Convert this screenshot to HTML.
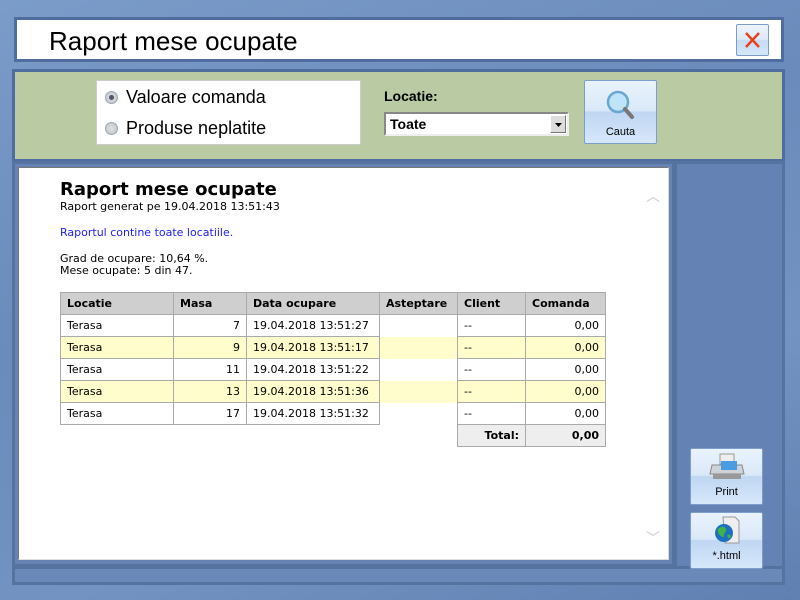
<!DOCTYPE html>
<html><head><meta charset="utf-8"><style>
*{margin:0;padding:0;box-sizing:border-box}
body{width:800px;height:600px;overflow:hidden;position:relative;background:linear-gradient(160deg,#7b9cc9 0%,#6a8bbb 40%,#7393c2 70%,#5f80b1 100%);font-family:"Liberation Sans",sans-serif}
.abs{position:absolute}
.title{left:14px;top:17px;width:770px;height:45px;background:#fff;border:3px solid #4f6d9f;}
.title span{position:absolute;left:32px;top:6px;font-size:26px;color:#000}
.close{left:736px;top:24px;width:33px;height:32px;border:1px solid #7a9ccc;background:linear-gradient(#eef5fd 0,#dbe9f9 48%,#c6dcf4 52%,#d4e6f9 100%);border-radius:2px}
.green{left:12px;top:69px;width:773px;height:93px;background:#bacba3;border:3px solid #4f6d9f}
.radio{left:96px;top:80px;width:265px;height:65px;background:#fff;border:1px solid #ccc}
.rb{position:absolute;left:8px;width:13px;height:13px;border-radius:50%;background:radial-gradient(#e0e0e0,#bcc3cc);border:1px solid #9aa}
.rl{position:absolute;left:29px;font-size:18px;color:#000}
.lbl{left:384px;top:88px;font-size:14px;font-weight:bold;color:#000}
.sel{left:384px;top:112px;width:185px;height:24px;background:#fff;border:2px solid;border-color:#888 #eee #eee #888}
.sel span{position:absolute;left:4px;top:2px;font-size:14px;font-weight:bold}
.sel i{position:absolute;right:1px;top:1px;width:16px;height:18px;background:#ddd;border:1px solid;border-color:#fff #777 #777 #fff}
.btn{border:1px solid #7c9ecf;background:linear-gradient(#eaf3fd 0,#d9e8f8 48%,#bfd6f2 50%,#d6e7fa 100%);border-radius:2px;font-size:11px;text-align:center;color:#000}
.frame{left:12px;top:161px;width:663px;height:406px;border:3px solid #56739f;background:#6683b3}
.right{left:674px;top:161px;width:111px;height:414px;border:3px solid #56739f;background:#6482b3}
.white{left:18px;top:167px;width:651px;height:393px;background:#fff;border:1px solid #777;border-right-color:#ddd;border-bottom-color:#ddd}
.rep{font-family:"DejaVu Sans",sans-serif;font-size:11px;color:#000;line-height:12px}
table{border-collapse:collapse;position:absolute;left:60px;top:292px;font-family:"DejaVu Sans",sans-serif;font-size:11px}
td{height:22px;padding:0 6px;border:1px solid #aaa;}
th{height:22px;padding:0 6px;background:#cfcfcf;border:1px solid #aaa;text-align:left;font-weight:bold}
.y td{background:#fffdcb}
.r{text-align:right}
.bottom{left:12px;top:566px;width:773px;height:19px;border:3px solid #56739f;background:#6b89b8}
</style></head><body>
<div class="abs title"><span>Raport mese ocupate</span></div>
<div class="abs close"><svg width="31" height="30"><path d="M9 8L22 22M22 8L9 22" stroke="#e8401c" stroke-width="2.4"/></svg></div>
<div class="abs green"></div>
<div class="abs radio">
<div class="rb" style="top:10px"><div style="position:absolute;left:3px;top:3px;width:5px;height:5px;border-radius:50%;background:#556"></div></div><div class="rl" style="top:6px">Valoare comanda</div>
<div class="rb" style="top:41px"></div><div class="rl" style="top:37px">Produse neplatite</div>
</div>
<div class="abs lbl">Locatie:</div>
<div class="abs sel"><span>Toate</span><i><svg width="14" height="16"><path d="M4 7h7l-3.5 4z" fill="#000"/></svg></i></div>
<div class="abs btn" style="left:584px;top:80px;width:73px;height:64px"><svg width="40" height="38" style="margin-top:6px"><circle cx="17" cy="15" r="10" fill="#bfe4f8" stroke="#6aa6d2" stroke-width="2.5"/><path d="M24 22L31 30" stroke="#777" stroke-width="4" stroke-linecap="round"/></svg><div style="margin-top:-2px">Cauta</div></div>
<div class="abs frame"></div>
<div class="abs right"></div>
<div class="abs bottom"></div>
<div class="abs white"></div>
<div class="abs" style="left:646px;top:186px;font-size:14px;color:#ccc">︿</div>
<div class="abs" style="left:646px;top:528px;font-size:14px;color:#ccc">﹀</div>
<div class="abs rep" style="left:60px;top:180px;font-size:18px;font-weight:bold;line-height:20px">Raport mese ocupate</div>
<div class="abs rep" style="left:60px;top:201px">Raport generat pe 19.04.2018 13:51:43</div>
<div class="abs rep" style="left:60px;top:227px;color:#2020ff">Raportul contine toate locatiile.</div>
<div class="abs rep" style="left:60px;top:253px">Grad de ocupare: 10,64 %.<br>Mese ocupate: 5 din 47.</div>
<table>
<tr><th style="width:113px">Locatie</th><th style="width:73px">Masa</th><th style="width:133px">Data ocupare</th><th style="width:78px">Asteptare</th><th style="width:68px">Client</th><th style="width:80px">Comanda</th></tr>
<tr><td>Terasa</td><td class="r">7</td><td>19.04.2018 13:51:27</td><td style="border:none"></td><td>--</td><td class="r">0,00</td></tr>
<tr class="y"><td>Terasa</td><td class="r">9</td><td>19.04.2018 13:51:17</td><td style="border:none"></td><td>--</td><td class="r">0,00</td></tr>
<tr><td>Terasa</td><td class="r">11</td><td>19.04.2018 13:51:22</td><td style="border:none"></td><td>--</td><td class="r">0,00</td></tr>
<tr class="y"><td>Terasa</td><td class="r">13</td><td>19.04.2018 13:51:36</td><td style="border:none"></td><td>--</td><td class="r">0,00</td></tr>
<tr><td>Terasa</td><td class="r">17</td><td>19.04.2018 13:51:32</td><td style="border:none"></td><td>--</td><td class="r">0,00</td></tr>
<tr><td style="border:none;border-top:1px solid #aaa"></td><td style="border:none;border-top:1px solid #aaa"></td><td style="border:none;border-top:1px solid #aaa"></td><td style="border:none"></td><td class="r" style="background:#eee;font-weight:bold">Total:</td><td class="r" style="background:#eee;font-weight:bold">0,00</td></tr>
</table>
<div class="abs btn" style="left:690px;top:448px;width:73px;height:57px"><svg width="40" height="32" style="margin-top:2px"><rect x="13" y="3" width="14" height="10" fill="#eee" stroke="#999"/><path d="M5 14h30l2 9H3z" fill="#cfd3d8" stroke="#888"/><rect x="14" y="10" width="16" height="9" fill="#4a9be0"/><rect x="6" y="23" width="28" height="5" fill="#999"/></svg><div>Print</div></div>
<div class="abs btn" style="left:690px;top:512px;width:73px;height:57px"><svg width="40" height="32" style="margin-top:2px"><path d="M16 2h12l4 4v22H18z" fill="#eee" stroke="#999"/><circle cx="17" cy="18" r="9" fill="#1f6fc0"/><path d="M11 14c3-3 7-3 8 0s-3 4-2 8c-4 0-7-4-6-8zM20 20c2-1 4 0 4 2-2 2-3 2-4-2z" fill="#3db34a"/></svg><div>*.html</div></div>
</body></html>
